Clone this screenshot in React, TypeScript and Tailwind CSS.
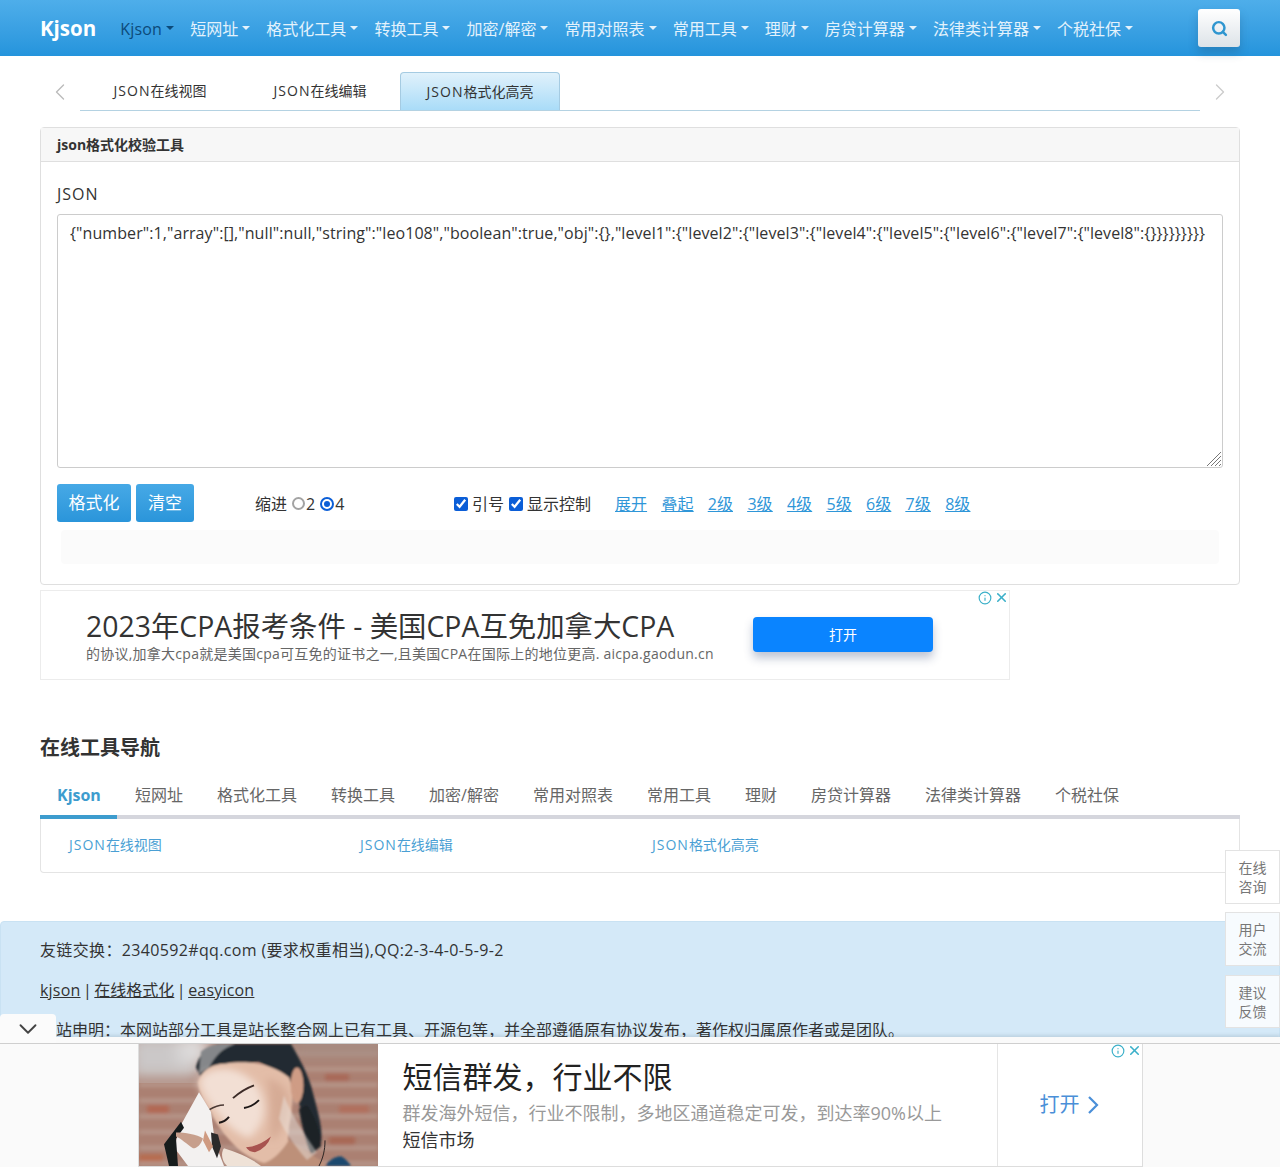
import { ChevronDown, ChevronLeft, ChevronRight, Search, X, Info } from "lucide-react";

const navItems = ["Kjson", "短网址", "格式化工具", "转换工具", "加密/解密", "常用对照表", "常用工具", "理财", "房贷计算器", "法律类计算器", "个税社保"];
const levels = ["展开", "叠起", "2级", "3级", "4级", "5级", "6级", "7级", "8级"];
const jsonText = '{"number":1,"array":[],"null":null,"string":"leo108","boolean":true,"obj":{},"level1":{"level2":{"level3":{"level4":{"level5":{"level6":{"level7":{"level8":{}}}}}}}}}';
const brickRows = [8, 24, 40, 56, 72, 88, 104, 120];

// fullwidth punctuation, kept as escapes so it survives editing
const FC = "\uFF0C";
const FL = "\uFF1A";

function Json() {
  return <span className="tracking-[1px]">JSON</span>;
}

function Photo() {
  return (
    <svg viewBox="0 0 239 124" className="w-[239px] h-full shrink-0" preserveAspectRatio="none">
      <defs>
        <filter id="px1"><feGaussianBlur stdDeviation="1" /></filter>
        <filter id="px0"><feGaussianBlur stdDeviation="0.5" /></filter>
        <filter id="px2"><feGaussianBlur stdDeviation="2.2" /></filter>
        <filter id="px4"><feGaussianBlur stdDeviation="4" /></filter>
        <filter id="px8"><feGaussianBlur stdDeviation="8" /></filter>
      </defs>
      <rect width="239" height="124" fill="#ab8072" />
      <g filter="url(#px2)" opacity="0.75">
        {brickRows.map((y) => (
          <rect key={y} x="0" y={y} width="239" height="3" fill="#c2aca2" />
        ))}
        <rect x="8" y="62" width="22" height="9" fill="#b5614a" />
        <rect x="0" y="112" width="24" height="8" fill="#bb6543" />
        <rect x="186" y="30" width="24" height="8" fill="#a9614f" />
        <rect x="200" y="62" width="30" height="9" fill="#b26a57" />
        <rect x="190" y="94" width="26" height="9" fill="#a8604c" />
      </g>
      <g filter="url(#px8)">
        <rect x="-10" y="-10" width="70" height="45" fill="#cbc8c8" />
        <rect x="40" y="-10" width="30" height="30" fill="#dedcdc" />
        <rect x="150" y="-10" width="100" height="26" fill="#a68d84" opacity="0.8" />
      </g>
      <g filter="url(#px1)">
        <path d="M57 24 C60 10 70 0 84 0 L152 0 C160 14 170 32 174 50 C180 72 184 88 182 100 L170 96 L160 60 L150 34 L120 18 L74 22 L62 34 Z" fill="#222a31" />
        <path d="M62 8 C68 2 76 0 84 0 L96 0 C84 4 76 12 70 24 L60 30 Z" fill="#85878a" />
        <path d="M168 62 C176 74 182 90 182 104 L172 112 C166 96 162 80 160 66 Z" fill="#1d2227" />
        <path d="M148 96 L190 124 L118 124 L122 112 Z" fill="#bd9079" />
        <path d="M186 124 C190 118 196 114 202 114 C206 116 210 120 212 124 Z" fill="#1e4a6e" />
        <path d="M59 39 C62 28 72 20 86 20 C108 16 134 20 150 34 C155 48 153 66 150 84 L149 99 C142 110 134 118 125 121 C116 118 108 114 102 109 C90 98 78 84 72 69 C66 60 60 50 59 39 Z" fill="#e3bda8" />
        <ellipse cx="158" cy="42" rx="6.5" ry="18" fill="#cf9c85" />
      </g>
      <g filter="url(#px4)">
        <path d="M60 38 C64 28 76 24 92 26 C108 30 120 40 124 56 C128 72 122 86 110 96 C100 92 88 84 78 70 C70 60 62 50 60 38 Z" fill="#f2dfd4" />
        <path d="M128 34 C140 38 150 46 150 60 C148 76 142 92 132 100 C130 76 132 52 128 34 Z" fill="#d6ab95" />
      </g>
      <g filter="url(#px1)">
        <path d="M145 52 C152 72 166 92 178 110 L168 118 C156 104 146 90 140 76 Z" fill="#ece6e3" opacity="0.45" />
      </g>
      <g filter="url(#px0)">
        <path d="M94 55 Q104 46 115 42" stroke="#3c2c28" strokeWidth="2" fill="none" />
        <path d="M70 67 Q78 62 85 62" stroke="#4a3833" strokeWidth="1.5" fill="none" />
        <path d="M105 65 Q113 64 120 57" stroke="#1f1816" strokeWidth="2" fill="none" />
        <path d="M80 80 Q86 79 90 74" stroke="#1f1816" strokeWidth="2" fill="none" />
        <path d="M107 105 Q120 104 132 94 Q128 106 116 110 Q110 110 107 105 Z" fill="#a8524f" />
        <path d="M60 49 L42 82 L35 105 L49 124 L85 124 L76 100 L72 69 Z" fill="#f3f1f0" />
        <path d="M42 79 L25 102 L30 124 L39 124 L37 96 L45 85 Z" fill="#181b1f" />
        <path d="M37 90 C46 90 58 92 64 96 C62 102 58 106 54 106 C48 102 42 96 37 94 Z" fill="#c79f8c" />
        <path d="M72 90 L79 92 L82 104 L78 116 L73 104 Z" fill="#2c2a2c" />
        <path d="M66 88 L74 104 L70 110 L64 98 Z" fill="#cf9a80" />
        <path d="M85 106 C98 110 112 116 122 124 L88 124 C82 118 82 110 85 106 Z" fill="#efe2d7" />
        <path d="M186 98 C186 108 184 116 180 124" stroke="#2a2422" strokeWidth="1" fill="none" />
      </g>
    </svg>
  );
}

function AdMark() {
  return (
    <div className="absolute -top-px right-0 flex items-center gap-[2px] text-[#3bb0c9]">
      <Info size={14} />
      <X size={15} strokeWidth={2.5} />
    </div>
  );
}

export default function App() {
  return (
    <div className="relative h-[1167px] overflow-hidden bg-white text-[#333] font-['Open_Sans','Noto_Sans_CJK_SC',sans-serif]">
      <nav className="flex h-14 items-center bg-gradient-to-b from-[#4eaeea] to-[#2494dc] pl-10 pr-10">
        <a className="mr-[24px] text-[20.5px] font-bold text-white">Kjson</a>
        <div className="flex flex-1 items-center gap-[16.1px] pt-[2px]">
          {navItems.map((item, i) => (
            <a key={item} className={"flex items-center text-base " + (i === 0 ? "text-[#0c4a7a]" : "text-[#e3f2fc]")}>
              <span className={i === 0 ? "tracking-[0.2px]" : ""}>{item}</span>
              <span className="ml-1 -mt-[2px] border-x-[4px] border-t-[4px] border-x-transparent border-t-current" />
            </a>
          ))}
        </div>
        <button className="flex h-[38px] w-[42px] items-center justify-center rounded-[3px] bg-gradient-to-b from-white to-[#dde3e8] shadow-[0_6px_10px_rgba(30,80,120,0.3)]">
          <Search size={17} strokeWidth={3.5} className="text-[#2f96d0]" />
        </button>
      </nav>

      <div className="px-10">
        <div className="flex h-[55px] items-end">
          <ChevronLeft size={28} strokeWidth={1.2} className="mb-[5px] ml-[6px] mr-[6px] w-[28px] text-[#bbb]" />
          <div className="flex h-[39px] flex-1 border-b border-[#b4d2e2]">
            <a className="flex w-40 items-center justify-center text-sm"><Json />在线视图</a>
            <a className="flex w-40 items-center justify-center text-sm"><Json />在线编辑</a>
            <a className="flex w-40 items-center justify-center rounded-t border border-b-0 border-[#a5cbe2] bg-gradient-to-b from-[#e0f1fb] to-[#a9dcf8] text-sm"><Json />格式化高亮</a>
          </div>
          <ChevronRight size={28} strokeWidth={1.2} className="mb-[5px] w-[40px] text-[#ccc]" />
        </div>

        <section className="mt-4 rounded border border-[#dfdfdf]">
          <h3 className="h-[34px] border-b border-[#dfdfdf] bg-[#f7f7f7] pl-4 text-sm font-bold leading-[33px]">json格式化校验工具</h3>
          <div className="px-4 pt-[21px] pb-5">
            <label className="block text-base leading-[22px]"><Json /></label>
            <div className="relative mt-[9px]">
              <textarea
                readOnly
                value={jsonText}
                className="block h-[254px] w-full resize-none rounded-[3px] border border-[#ccc] px-3 py-[6px] text-base leading-6 tracking-[0.08px] outline-none"
              />
              <svg viewBox="0 0 16 16" className="absolute bottom-[1px] right-[1px] size-4 text-[#777]">
                <path d="M1 15 15 1M5 15 15 5M9 15l6-6M13 15l2-2" stroke="currentColor" strokeWidth="1" fill="none" />
              </svg>
            </div>
            <div className="mt-4 flex items-center">
              <button className="h-[38px] w-[74px] rounded-[3px] bg-gradient-to-b from-[#46a9e6] to-[#2a95da] text-[17px] text-white">格式化</button>
              <button className="ml-[5px] h-[38px] w-[58px] rounded-[3px] bg-gradient-to-b from-[#46a9e6] to-[#2a95da] text-[17px] text-white">清空</button>
              <div className="ml-[61px] flex w-[199px] items-center pt-px text-base">
                缩进
                <span className="ml-[5px] size-[13px] rounded-full border-2 border-[#a3a3a3] bg-white" />
                <span className="ml-px">2</span>
                <span className="ml-[5px] flex size-[14px] items-center justify-center rounded-full border-2 border-[#0b5ed7] bg-white">
                  <span className="size-[6px] rounded-full bg-[#0b5ed7]" />
                </span>
                <span className="ml-px">4</span>
              </div>
              <label className="flex items-center pt-px text-base">
                <input type="checkbox" readOnly defaultChecked className="size-[14px] accent-[#0b5ed7]" />
                <span className="ml-[4px]">引号</span>
              </label>
              <label className="ml-[5px] flex items-center pt-px text-base">
                <input type="checkbox" readOnly defaultChecked className="size-[14px] accent-[#0b5ed7]" />
                <span className="ml-[4px]">显示控制</span>
              </label>
              <div className="ml-[24px] flex gap-[14.4px] pt-px text-base text-[#2f96d8] underline">
                {levels.map((l) => <a key={l}>{l}</a>)}
              </div>
            </div>
            <div className="mx-1 mt-2 h-[34px] rounded-sm bg-[#fbfbfb]" />
          </div>
        </section>

        <div className="relative mt-[5px] flex h-[90px] w-[970px] items-center border border-[#ececec] pl-[45px]">
          <div>
            <p className="mt-[2px] text-[28.4px] leading-[36px] text-[#333]">2023年CPA报考条件 - 美国CPA互免加拿大CPA</p>
            <p className="text-sm leading-5 tracking-[0.25px] text-[#666]">的协议,加拿大cpa就是美国cpa可互免的证书之一,且美国CPA在国际上的地位更高. aicpa.gaodun.cn</p>
          </div>
          <a className="absolute left-[712px] top-[26px] flex h-[35px] w-[180px] items-center justify-center rounded bg-[#0a84ff] text-sm text-white shadow-[0_6px_10px_rgba(40,60,110,0.3)]">打开</a>
          <AdMark />
        </div>

        <h2 className="mt-[54px] text-xl font-bold leading-7">在线工具导航</h2>
        <ul className="mt-5 flex h-[33px] pt-px text-base text-[#666]">
          <li className="mr-[18px] w-[77px] pl-[17px] font-bold text-[#3d9cce]">Kjson</li>
          {navItems.slice(1).map((item) => <li key={item} className="mr-[34px]">{item}</li>)}
        </ul>
        <div className="h-1 bg-[#d5d6dd]">
          <div className="h-1 w-[77px] bg-[#3d9cce]" />
        </div>
        <div className="flex h-[54px] items-center rounded-b border border-t-0 border-[#e4e4e4] pb-[2px] pl-7 text-sm text-[#4a9fd4]">
          <a className="w-[291px]"><Json />在线视图</a>
          <a className="w-[292px]"><Json />在线编辑</a>
          <a><Json />格式化高亮</a>
        </div>
      </div>

      <footer className="mt-[48px] rounded border border-[#c9e2f3] bg-[#d4e9f8] px-[39px] pt-4 text-base text-[#333]">
        <p className="leading-6 tracking-[0.35px]">{`友链交换${FL}2340592#qq.com (要求权重相当),QQ:2-3-4-0-5-9-2`}</p>
        <p className="mt-4 leading-6"><a className="underline tracking-[0.2px]">kjson</a><span className="mx-[2.5px]">|</span><a className="underline">在线格式化</a><span className="mx-[2.5px]">|</span><a className="underline tracking-[0.2px]">easyicon</a></p>
        <p className="mt-4 leading-6">{`本站申明${FL}本网站部分工具是站长整合网上已有工具、开源包等${FC}并全部遵循原有协议发布${FC}著作权归属原作者或是团队。`}</p>
      </footer>

      <aside className="absolute right-0 top-[850px] flex w-[55px] flex-col text-sm leading-[19px] text-[#777]">
        <a className="flex h-[54px] items-center justify-center border border-[#e3e3e3] bg-white text-center">在线<br />咨询</a>
        <a className="mt-2 flex h-[54px] items-center justify-center border border-[#e3e3e3] bg-[#f7fbfe] text-center">用户<br />交流</a>
        <a className="mt-[9px] flex h-[53px] items-center justify-center border border-[#e3e3e3] bg-[#f7fbfe] text-center">建议<br />反馈</a>
      </aside>

      <div className="absolute bottom-0 left-0 right-0 h-[130px] bg-[#fafafa] pt-[6px] shadow-[0_-2px_3px_rgba(60,80,100,0.15)]">
        <button className="absolute -top-[23px] left-0 flex h-[29px] w-[56px] items-center justify-center rounded-t-[4px] bg-[#fbfbfb]">
          <ChevronDown size={30} strokeWidth={1.5} className="text-[#444]" />
        </button>
        <div className="border-t border-[#cfcfcf]">
          <div className="relative mx-auto flex h-[123px] w-[1005px] border-x border-b border-[#ddd] bg-white">
            <Photo />
            <div className="flex-1 pl-[25px]">
              <p className="mt-[13px] text-[30px] leading-10 text-[#222]">{`短信群发${FC}行业不限`}</p>
              <p className="mt-[2px] text-lg leading-7 text-[#999]">{`群发海外短信${FC}行业不限制${FC}多地区通道稳定可发${FC}到达率90%以上`}</p>
              <p className="-mt-[1px] text-lg leading-7 text-[#333]">短信市场</p>
            </div>
            <a className="flex w-[145px] items-center gap-[7px] border-l border-[#e5e5e5] pl-[42px] text-xl text-[#4a8fd8]">
              打开
              <svg viewBox="0 0 12 18" className="h-[18px] w-3" fill="none" stroke="currentColor" strokeWidth="2.2">
                <path d="M2 1l8 8-8 8" />
              </svg>
            </a>
            <AdMark />
          </div>
        </div>
      </div>
    </div>
  );
}
